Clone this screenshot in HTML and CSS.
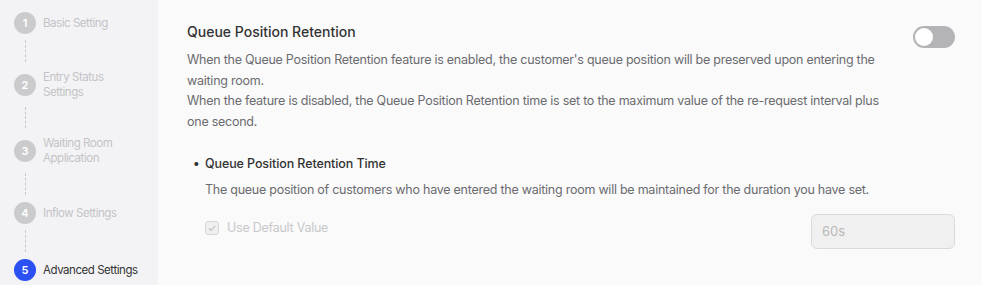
FILE: index.html
```html
<!DOCTYPE html>
<html lang="en">
<head>
    <meta charset="UTF-8">
    <meta name="viewport" content="width=device-width, initial-scale=1.0">
    <title>Advanced Settings</title>
    <link rel="stylesheet" href="styles.css">
</head>
<body>
<div class="page">
    <aside class="steps">
        <div class="step">
            <span class="step-num">1</span>
            <span class="step-label">Basic Setting</span>
        </div>
        <div class="step-line line-1"></div>
        <div class="step">
            <span class="step-num">2</span>
            <span class="step-label">Entry Status<br>Settings</span>
        </div>
        <div class="step-line line-2"></div>
        <div class="step">
            <span class="step-num">3</span>
            <span class="step-label">Waiting Room<br>Application</span>
        </div>
        <div class="step-line line-3"></div>
        <div class="step">
            <span class="step-num">4</span>
            <span class="step-label">Inflow Settings</span>
        </div>
        <div class="step-line line-4"></div>
        <div class="step active">
            <span class="step-num">5</span>
            <span class="step-label">Advanced Settings</span>
        </div>
    </aside>

    <main class="content">
        <div class="section-head">
            <h3>Queue Position Retention</h3>
            <span class="toggle"><span class="knob"></span></span>
        </div>
        <p class="desc">
            When the Queue Position Retention feature is enabled, the customer's queue position will be preserved upon entering the waiting room.<br>
            When the feature is disabled, the Queue Position Retention time is set to the maximum value of the re-request interval plus one second.
        </p>

        <div class="sub">
            <h4><span class="bullet">•</span>Queue Position Retention Time</h4>
            <p class="sub-desc">The queue position of customers who have entered the waiting room will be maintained for the duration you have set.</p>
            <div class="sub-row">
                <label class="check">
                    <span class="box">
                        <svg width="10" height="10" viewBox="0 0 10 10"><path d="M1.8 5.2 L4 7.3 L8.3 2.8" fill="none" stroke="#c4c4c4" stroke-width="1.2"/></svg>
                    </span>
                    Use Default Value
                </label>
                <input class="value-input" type="text" value="60s" disabled>
            </div>
        </div>
    </main>
</div>
</body>
</html>
```

FILE: styles.css
```css
body {
    margin: 0;
    padding: 0;
    font-family: Inter, "Noto Sans", Arial, sans-serif;
    background-color: #fafafa;
}

.page {
    display: flex;
    height: 285px;
    overflow: hidden;
}

.steps {
    width: 158px;
    flex-shrink: 0;
    background-color: #f3f3f6;
    padding: 12px 0 0 14px;
    box-sizing: border-box;
}

.step {
    display: flex;
    align-items: center;
    gap: 7px;
}

.step-num {
    width: 22px;
    height: 22px;
    border-radius: 50%;
    background-color: #cbcbce;
    color: #fff;
    font-size: 11px;
    font-weight: 600;
    display: flex;
    align-items: center;
    justify-content: center;
    flex-shrink: 0;
}

.step-label {
    font-size: 11.5px;
    letter-spacing: -0.45px;
    line-height: 15px;
    color: #c3c3c6;
}

.step.active .step-num {
    background-color: #2b50f4;
}

.step.active .step-label {
    color: #333;
}

.step-line {
    width: 0;
    border-left: 1px dashed #c9c9cc;
    margin-left: 10.5px;
}

.line-1 { height: 22px; margin-top: 6px; margin-bottom: 8px; }
.line-2 { height: 21px; margin-top: 7px; margin-bottom: 8px; }
.line-3 { height: 22px; margin-top: 7px; margin-bottom: 7px; }
.line-4 { height: 22px; margin-top: 6px; margin-bottom: 7px; }

.content {
    flex: 1;
    padding: 22px 27px 0 29px;
    color: #666;
}

.section-head {
    display: flex;
    justify-content: space-between;
    align-items: flex-start;
}

.section-head h3 {
    margin: 0;
    font-size: 14px;
    font-weight: 500;
    color: #333;
    line-height: 20px;
}

.toggle {
    width: 42px;
    height: 22px;
    border-radius: 11px;
    background-color: #b4b4b7;
    margin-top: 4px;
    display: flex;
    align-items: center;
    padding-left: 2px;
    box-sizing: border-box;
}

.knob {
    width: 18px;
    height: 18px;
    border-radius: 50%;
    background-color: #fff;
}

.desc {
    margin: 2px 0 0;
    max-width: 700px;
    font-size: 12.5px;
    letter-spacing: -0.25px;
    line-height: 20.7px;
    color: #6b6b70;
}

.sub {
    margin-top: 22px;
    padding-left: 18px;
}

.sub h4 {
    margin: 0;
    font-size: 12.5px;
    font-weight: 500;
    letter-spacing: -0.1px;
    color: #333;
    line-height: 18px;
    position: relative;
}

.bullet {
    position: absolute;
    left: -12px;
}

.sub-desc {
    margin: 8px 0 0;
    font-size: 12.5px;
    letter-spacing: -0.25px;
    line-height: 18px;
    color: #6b6b70;
}

.sub-row {
    display: flex;
    justify-content: space-between;
    align-items: flex-start;
    margin-top: 15px;
}

.check {
    display: flex;
    align-items: center;
    gap: 8px;
    margin-top: 6px;
    line-height: 16px;
    font-size: 12.5px;
    letter-spacing: -0.25px;
    color: #c8c8cb;
}

.box {
    width: 12px;
    height: 12px;
    border: 1px solid #d6d6d8;
    border-radius: 3px;
    background-color: #efefef;
    display: flex;
    align-items: center;
    justify-content: center;
}

.value-input {
    width: 144px;
    height: 35px;
    box-sizing: border-box;
    border: 1px solid #dadada;
    border-radius: 6px;
    background-color: #f0f0f0;
    padding: 0 10px;
    font-family: inherit;
    font-size: 13px;
    color: #b8b8b8;
}
```
